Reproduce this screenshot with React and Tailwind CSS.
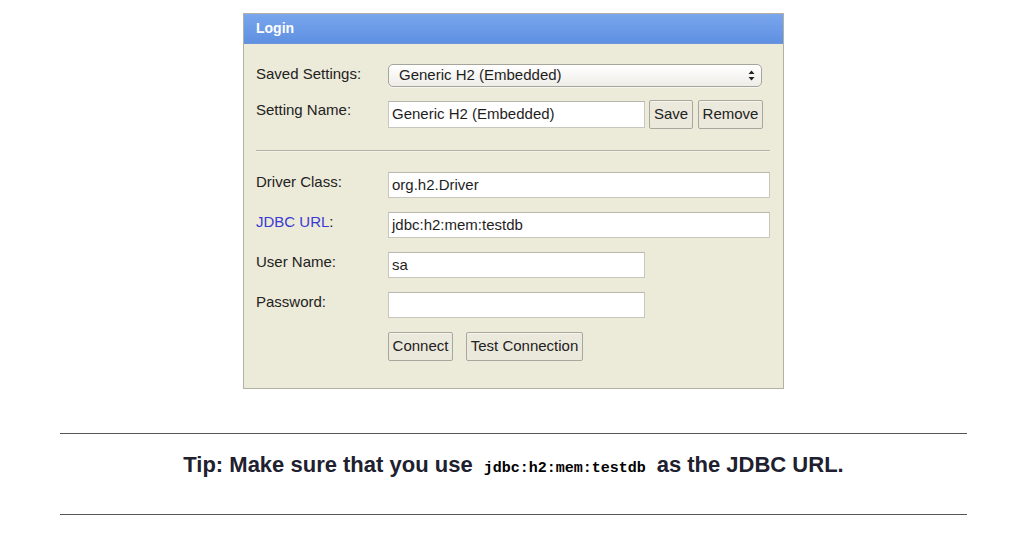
import React from "react";

function Field({ value, wide }) {
  return (
    <div
      className={`${wide ? "w-[382px]" : "w-[257px]"} h-[26px] bg-white border border-[#c9c7bd] border-t-[#b8b6ad] pl-[3px] flex items-center text-[15px] text-[#1e1e1e]`}
    >
      {value}
    </div>
  );
}

function Btn({ children, w }) {
  return (
    <div
      className={`${w} h-[29px] border border-[#a9a79d] rounded-[2px] bg-[#ebe9dc] flex items-center justify-center text-[15px] text-[#222] shadow-[inset_0_1px_0_#f6f5ee]`}
    >
      {children}
    </div>
  );
}

function Row({ label, blue, children, className = "" }) {
  return (
    <div className={`flex items-start ${className}`}>
      <div className={`w-[132px] pt-[1px] text-[15px] leading-[17px] ${blue ? "text-[#3a3ad0]" : "text-[#222]"}`}>
        {blue ? (
          <>
            <span>JDBC URL</span>
            <span className="text-[#222]">:</span>
          </>
        ) : (
          label
        )}
      </div>
      {children}
    </div>
  );
}

export default function App() {
  return (
    <div className="w-[1020px] h-[533px] bg-white pl-[60px] pr-[53px] pt-[13px] font-['Liberation_Sans',Arial,sans-serif]">
      {/* Login panel */}
      <div className="w-[541px] ml-[183px] border border-[#b3b1a6] bg-[#ecead9]">
        <div className="h-[30px] bg-gradient-to-b from-[#79a6ec] to-[#5f90e2] pl-[12px] flex items-center text-white font-bold text-[14px] border-b border-[#6d95d6]">
          Login
        </div>
        <div className="pl-[12px] pt-[20px] pb-[27px]">
          <Row label="Saved Settings:">
            <div className="w-[374px] h-[23px] rounded-[5px] border border-[#a6a49b] bg-gradient-to-b from-white to-[#eeede8] pl-[10px] pr-[6px] flex items-center justify-between text-[15px] text-[#1e1e1e] shadow-[0_1px_0_#f6f5ee]">
              <span>Generic H2 (Embedded)</span>
              <svg width="7" height="11" viewBox="0 0 7 11">
                <path d="M3.5 0.5 L6.5 4 L0.5 4 Z" fill="#222" />
                <path d="M3.5 10.5 L6.5 7 L0.5 7 Z" fill="#222" />
              </svg>
            </div>
          </Row>
          <Row label="Setting Name:" className="mt-[13px]">
            <div className="flex items-start">
              <div className="mt-[1px] w-[257px] h-[27px] bg-white border border-[#c9c7bd] border-t-[#b8b6ad] pl-[3px] flex items-center text-[15px] text-[#1e1e1e]">
                Generic H2 (Embedded)
              </div>
              <div className="ml-[4px] flex gap-[5px]">
                <Btn w="w-[44px]">Save</Btn>
                <Btn w="w-[65px]">Remove</Btn>
              </div>
            </div>
          </Row>
          <div className="mt-[21px] mr-[13px] h-[2px] border-t border-[#b4b1a5] border-b-[#f4f2e6] border-b" />
          <Row label="Driver Class:" className="mt-[20px]">
            <Field value="org.h2.Driver" wide />
          </Row>
          <Row label="JDBC URL:" blue className="mt-[14px]">
            <Field value="jdbc:h2:mem:testdb" wide />
          </Row>
          <Row label="User Name:" className="mt-[14px]">
            <Field value="sa" />
          </Row>
          <Row label="Password:" className="mt-[14px]">
            <Field value="" />
          </Row>
          <div className="mt-[14px] pl-[132px] flex gap-[13px]">
            <Btn w="w-[65px]">Connect</Btn>
            <Btn w="w-[117px]">Test Connection</Btn>
          </div>
        </div>
      </div>

      {/* Tip */}
      <div className="mt-[44px] border-t border-b border-[#555] h-[82px] flex items-center justify-center pb-[20px]">
        <p className="text-[22px] font-bold text-[#20202e]">
          Tip: Make sure that you use
          <code className="px-[11px] font-['Liberation_Mono',monospace] text-[15px] font-bold text-black">
            jdbc:h2:mem:testdb
          </code>
          as the JDBC URL.
        </p>
      </div>
    </div>
  );
}
